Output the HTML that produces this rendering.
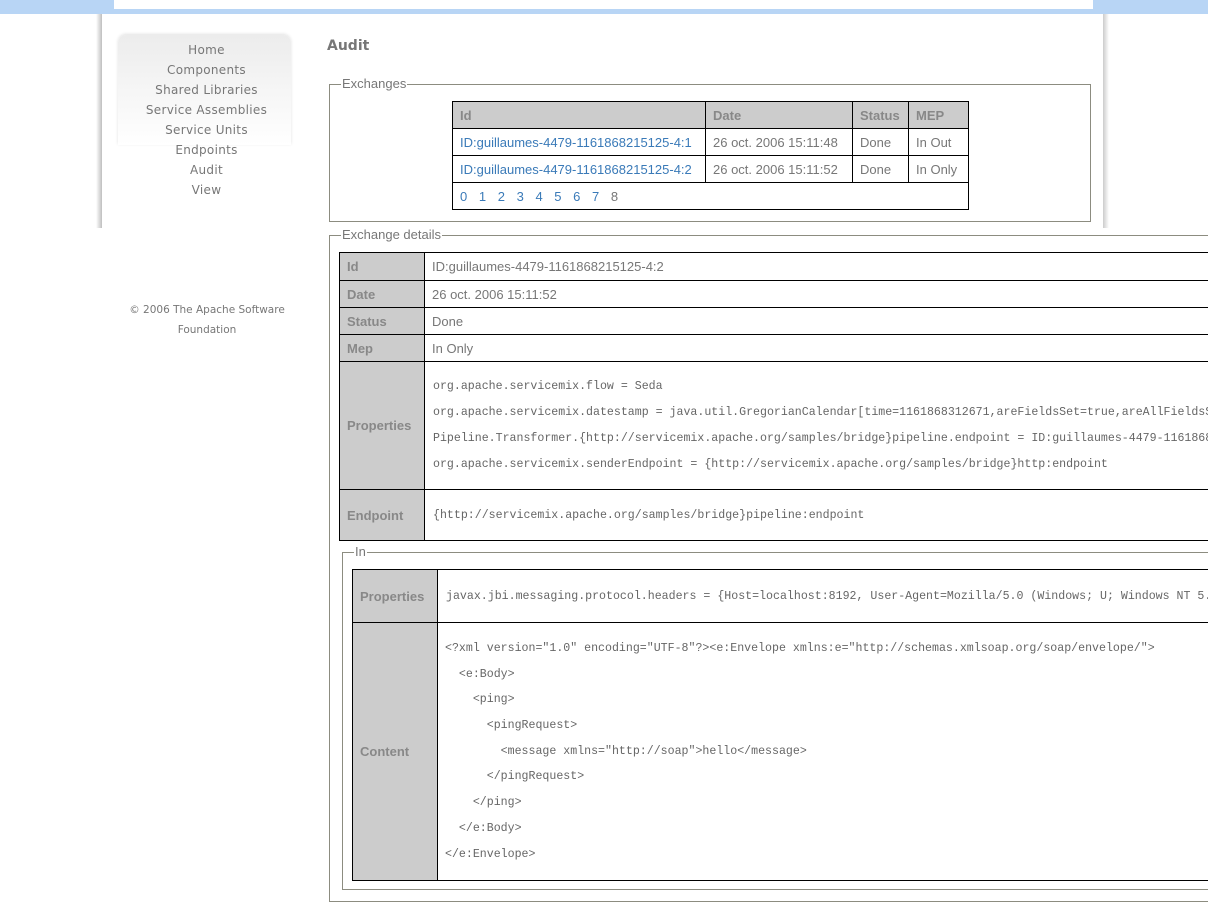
<!DOCTYPE html>
<html><head><meta charset="utf-8"><style>
*{margin:0;padding:0;box-sizing:border-box}
body{width:1208px;height:914px;overflow:hidden;background:#fff;font-family:"Liberation Sans",sans-serif;position:relative;color:#777}
.abs{position:absolute}
#topband{left:0;top:0;width:1208px;height:14px;background:#b8d5f5}
#topwhite{left:114px;top:0;width:979px;height:9px;background:#fff}
#sl{left:96px;top:14px;width:6px;height:214px;background:linear-gradient(90deg,rgba(0,0,0,0),rgba(0,0,0,.25))}
#sr{left:1103px;top:14px;width:6px;height:214px;background:linear-gradient(90deg,rgba(0,0,0,.2),rgba(0,0,0,0))}
#pg{left:102px;top:14px;width:1001px;height:214px;background:#fff}
#navbg{left:118px;top:35px;width:173px;height:110px;border-radius:8px 8px 0 0;background:linear-gradient(#ececec,#fff);box-shadow:0 -1px 3px rgba(0,0,0,.12)}
#nav{left:118px;top:40px;width:177px}
#nav div{text-align:center;font-family:"DejaVu Sans",sans-serif;font-size:12px;height:20px;line-height:20px;color:#777;letter-spacing:0.3px}
#copy{left:118px;top:300px;width:178px;text-align:center;font-family:"DejaVu Sans",sans-serif;font-size:10.5px;line-height:20px;color:#777}
h1{position:absolute;left:327px;top:38px;font-size:14px;color:#777;font-weight:bold;font-family:"DejaVu Sans",sans-serif}
fieldset{position:absolute;border:1px solid #8c8c80}
legend{font-size:13px;color:#777;padding:0 1px;margin-left:11px;line-height:14px}
table{border-collapse:collapse;font-size:13px;position:absolute;table-layout:fixed}
td,th{border:1px solid #000;padding:0 7px;text-align:left;white-space:nowrap;overflow:hidden;color:#777;font-weight:normal}
th{background:#ccc;font-weight:bold;color:#888}
a{color:#3a7ab8;text-decoration:none}
.mono{font-family:"Liberation Mono",monospace;font-size:11.6px;color:#666}
.pl{height:26px;line-height:26px}
.cl{height:25.7px;line-height:25.7px}
</style></head><body>
<div class="abs" id="topband"></div>
<div class="abs" id="topwhite"></div>
<div class="abs" id="sl"></div>
<div class="abs" id="sr"></div>
<div class="abs" id="pg"></div>
<div class="abs" id="navbg"></div>
<div class="abs" id="nav">
<div>Home</div><div>Components</div><div>Shared Libraries</div><div>Service Assemblies</div><div>Service Units</div><div>Endpoints</div><div>Audit</div><div>View</div>
</div>
<div class="abs" id="copy">© 2006 The Apache Software<br>Foundation</div>
<h1>Audit</h1>

<fieldset style="left:329px;top:77px;width:762px;height:145px"><legend>Exchanges</legend></fieldset>
<table style="left:452px;top:101px;width:516px">
<colgroup><col style="width:253px"><col style="width:147px"><col style="width:56px"><col style="width:60px"></colgroup>
<tr style="height:27px"><th>Id</th><th>Date</th><th>Status</th><th>MEP</th></tr>
<tr style="height:27px"><td><a>ID:guillaumes-4479-1161868215125-4:1</a></td><td>26 oct. 2006 15:11:48</td><td>Done</td><td>In Out</td></tr>
<tr style="height:27px"><td><a>ID:guillaumes-4479-1161868215125-4:2</a></td><td>26 oct. 2006 15:11:52</td><td>Done</td><td>In Only</td></tr>
<tr style="height:27px"><td colspan="4" style="word-spacing:8px"><a>0</a> <a>1</a> <a>2</a> <a>3</a> <a>4</a> <a>5</a> <a>6</a> <a>7</a> <span>8</span></td></tr>
</table>

<fieldset style="left:329px;top:228px;width:900px;height:674px"><legend>Exchange details</legend></fieldset>
<table style="left:339px;top:252px;width:900px">
<colgroup><col style="width:85px"><col style="width:815px"></colgroup>
<tr style="height:28px"><th>Id</th><td>ID:guillaumes-4479-1161868215125-4:2</td></tr>
<tr style="height:27px"><th>Date</th><td>26 oct. 2006 15:11:52</td></tr>
<tr style="height:27px"><th>Status</th><td>Done</td></tr>
<tr style="height:27px"><th>Mep</th><td>In Only</td></tr>
<tr style="height:128px"><th>Properties</th><td class="mono" style="padding-left:8px">
<div class="pl">org.apache.servicemix.flow = Seda</div>
<div class="pl">org.apache.servicemix.datestamp = java.util.GregorianCalendar[time=1161868312671,areFieldsSet=true,areAllFieldsSet=true]</div>
<div class="pl">Pipeline.Transformer.{http://servicemix.apache.org/samples/bridge}pipeline.endpoint = ID:guillaumes-4479-1161868215125-4:2</div>
<div class="pl">org.apache.servicemix.senderEndpoint = {http://servicemix.apache.org/samples/bridge}http:endpoint</div>
</td></tr>
<tr style="height:51px"><th>Endpoint</th><td class="mono" style="padding-left:8px">{http://servicemix.apache.org/samples/bridge}pipeline:endpoint</td></tr>
</table>

<fieldset style="left:342px;top:545px;width:900px;height:345px"><legend>In</legend></fieldset>
<table style="left:352px;top:569px;width:900px">
<colgroup><col style="width:85px"><col style="width:815px"></colgroup>
<tr style="height:53px"><th>Properties</th><td class="mono" style="padding-left:8px">javax.jbi.messaging.protocol.headers = {Host=localhost:8192, User-Agent=Mozilla/5.0 (Windows; U; Windows NT 5.1)}</td></tr>
<tr style="height:254px"><th>Content</th><td class="mono" style="padding-left:7px;white-space:pre">
<div class="cl">&lt;?xml version="1.0" encoding="UTF-8"?&gt;&lt;e:Envelope xmlns:e="http://schemas.xmlsoap.org/soap/envelope/"&gt;</div><div class="cl">  &lt;e:Body&gt;</div><div class="cl">    &lt;ping&gt;</div><div class="cl">      &lt;pingRequest&gt;</div><div class="cl">        &lt;message xmlns="http://soap"&gt;hello&lt;/message&gt;</div><div class="cl">      &lt;/pingRequest&gt;</div><div class="cl">    &lt;/ping&gt;</div><div class="cl">  &lt;/e:Body&gt;</div><div class="cl">&lt;/e:Envelope&gt;</div>
</td></tr>
</table>
</body></html>
